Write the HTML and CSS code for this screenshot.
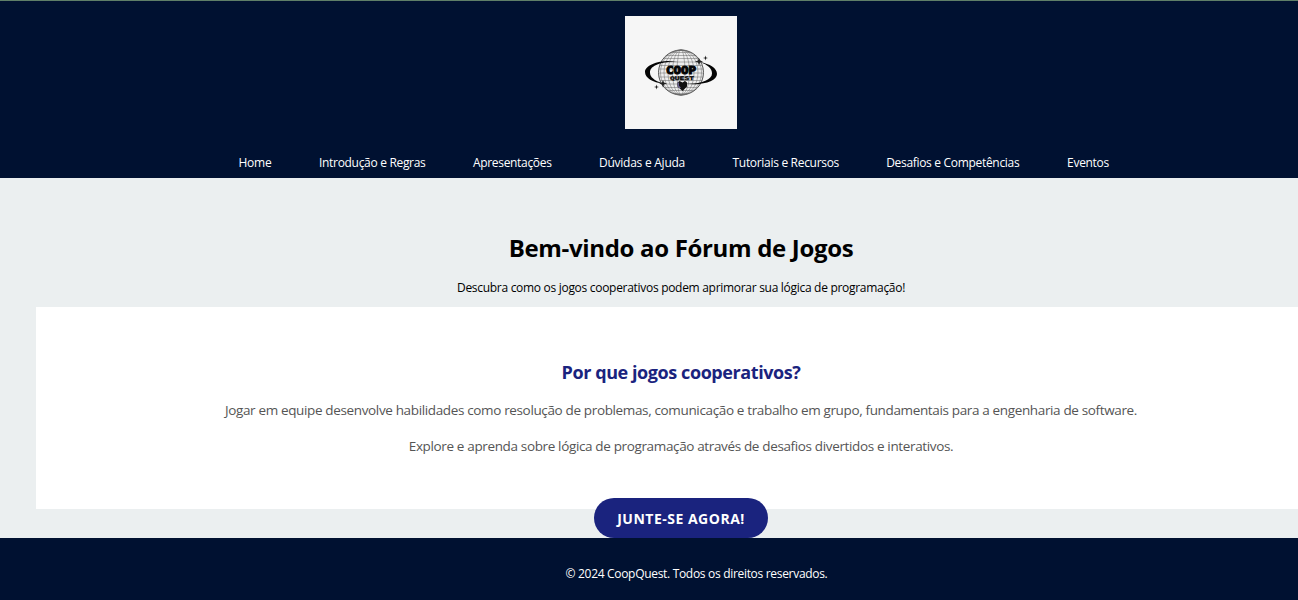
FILE: index.html
```html
<!DOCTYPE html>
<html lang="pt-BR">
<head>
<meta charset="utf-8">
<title>CoopQuest</title>
<link rel="stylesheet" href="styles.css">
</head>
<body>
<header class="header">
  <svg class="logo" viewBox="0 0 112 113" role="img" aria-label="Coop Quest">
    <rect width="112" height="113" fill="#f6f6f6"/>
    <g fill="none" stroke="#666" stroke-width=".5">
      <circle cx="56" cy="56.500" r="22.500" fill="#eee" stroke="#444" stroke-width=".9"/>
      <ellipse cx="56" cy="56.500" rx="4" ry="22.500"/>
      <ellipse cx="56" cy="56.500" rx="8.500" ry="22.500"/>
      <ellipse cx="56" cy="56.500" rx="13" ry="22.500"/>
      <ellipse cx="56" cy="56.500" rx="17" ry="22.500"/>
      <ellipse cx="56" cy="56.500" rx="20.500" ry="22.500"/>
      <path d="M46 36.500h20M42 39.500h28M39 42.500h34M37 46h38M35 49.500h42M34 53h44M34 57h44M34 61h44M35 64.500h42M37 68h38M40 71.500h32M43 74.500h26M48 77.500h16"/>
    </g>
    <path d="M53 45.500C36 43 20 48.500 20 56C20 62 28 66.500 38 67.500C29 64.500 25 61 25 56.500C25 49 37 45.500 53 45.500ZM75 46C85 48 92 52 92 58C92 65 78 70 60 67.500C75 68.500 87 64 87 57.500C87 52.500 83 49 75 46Z" fill="#050505"/>
    <path d="M74 42l1 2.600 3 1-3 1-1 3-1-3-3-1 3-1ZM38 64l1 2.600 3 1-3 1-1 3-1-3-3-1 3-1ZM80.500 39.500l.6 1.900 1.900.6-1.900.6-.6 1.900-.6-1.900-1.900-.6 1.900-.6ZM31.500 68.500l.6 1.900 1.900.6-1.900.6-.6 1.900-.6-1.900-1.900-.6 1.900-.6Z" fill="#222"/>
    <text class="logo-coop" x="56" y="58" textLength="30" lengthAdjust="spacingAndGlyphs">COOP</text>
    <text class="logo-quest" x="57" y="63.500" textLength="24" lengthAdjust="spacingAndGlyphs">QUEST</text>
    <path d="M57.500 75l-5-4.500v-4l2-1.500 3 1.500 2.500-1.500 2 1.500v4Z" fill="#111"/>
    <path d="M53.300 66.500v3.500l2 2" fill="none" stroke="#73689a" stroke-width="1.200"/>
  </svg>
  <nav class="nav">
    <a class="link home">Home</a>
    <a class="link intro">Introdução e Regras</a>
    <a class="link talks">Apresentações</a>
    <a class="link help">Dúvidas e Ajuda</a>
    <a class="link guides">Tutoriais e Recursos</a>
    <a class="link skills">Desafios e Competências</a>
    <a class="link events">Eventos</a>
  </nav>
</header>
<main class="main">
  <h1 class="title">Bem-vindo ao Fórum de Jogos</h1>
  <p class="lead">Descubra como os jogos cooperativos podem aprimorar sua lógica de programação!</p>
  <section class="panel">
    <h2 class="subtitle">Por que jogos cooperativos?</h2>
    <p class="copy copy-team">Jogar em equipe desenvolve habilidades como resolução de problemas, comunicação e trabalho em grupo, fundamentais para a engenharia de software.</p>
    <p class="copy copy-explore">Explore e aprenda sobre lógica de programação através de desafios divertidos e interativos.</p>
  </section>
  <a class="button">JUNTE-SE AGORA!</a>
</main>
<footer class="footer"><span>© 2024 CoopQuest. Todos os direitos reservados.</span></footer>
</body>
</html>
```
FILE: styles.css
```css
* { box-sizing: border-box; }
body {
  margin: 0;
  height: 600px;
  overflow: hidden;
  background: #ebeff0;
  font-family: "Segoe UI", "Open Sans", "Noto Sans", sans-serif;
  font-size: 12px;
  color: #000;
}
h1, h2, p { margin: 0; white-space: nowrap; }
.header {
  height: 178px;
  background: #001131;
  border-top: 1px solid #5f7f68;
  padding-top: 15px;
}
.logo { display: block; width: 112px; height: 113px; margin-left: 625px; }
.logo-coop, .logo-quest {
  font-family: "DejaVu Sans Mono", monospace;
  font-weight: bold;
  text-anchor: middle;
  fill: #050505;
}
.logo-coop { font-size: 10px; stroke: #050505; stroke-width: 1px; }
.logo-quest { font-size: 5px; stroke: #050505; stroke-width: .3px; }
.nav {
  display: flex;
  gap: 48px;
  margin: 24px 0 0 239px;
  line-height: 20px;
  color: #fff;
}
.link { display: flex; justify-content: center; white-space: nowrap; letter-spacing: -.31px; }
.home { width: 32px; letter-spacing: -.2px; }
.intro { width: 106.500px; }
.talks { width: 77.500px; }
.help { width: 86px; letter-spacing: -.25px; }
.guides { width: 105.500px; }
.skills { width: 132.500px; }
.events { width: 42px; }
.main {
  display: flex;
  flex-direction: column;
  align-items: center;
  width: 1290px;
  height: 360px;
  margin-left: 36px;
  padding-top: 53px;
}
.title { font-size: 24px; line-height: 34px; letter-spacing: -.33px; }
.lead { margin-top: 13px; line-height: 20px; letter-spacing: -.295px; }
.panel {
  width: 100%;
  height: 202px;
  flex: none;
  margin-top: 9px;
  padding-top: 51px;
  background: #fff;
  display: flex;
  flex-direction: column;
  align-items: center;
}
.subtitle { font-size: 18px; line-height: 28px; letter-spacing: -.42px; color: #1a237e; }
.copy { font-size: 13.500px; line-height: 20px; letter-spacing: -.355px; color: #555; }
.copy-team { margin-top: 14px; }
.copy-explore { margin-top: 16px; }
.button {
  width: 174px;
  height: 40px;
  flex: none;
  margin-top: -11px;
  border-radius: 20px;
  background: #1a237e;
  color: #fff;
  font-size: 14px;
  font-weight: bold;
  letter-spacing: .5px;
  line-height: 42px;
  text-align: center;
}
.footer {
  height: 62px;
  padding: 26px 0 0 95px;
  background: #001131;
  color: #fff;
  line-height: 20px;
  letter-spacing: -.31px;
  text-align: center;
}
```
